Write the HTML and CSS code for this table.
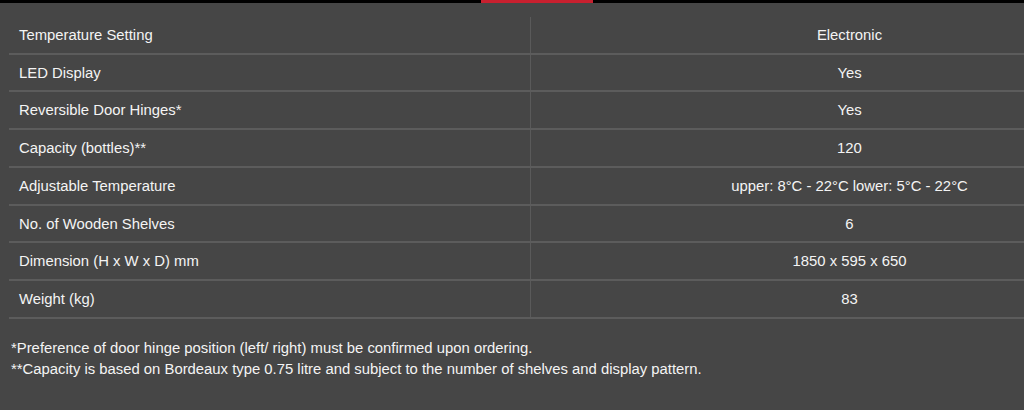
FILE: index.html
```html
<!DOCTYPE html>
<html>
<head>
<meta charset="utf-8">
<link rel="stylesheet" href="styles.css">
</head>
<body>
<div class="topbar"><div class="tab-indicator"></div></div>
<div class="content">
  <table class="specs">
    <tr><td class="label">Temperature Setting</td><td class="value">Electronic</td></tr>
    <tr><td class="label">LED Display</td><td class="value">Yes</td></tr>
    <tr><td class="label">Reversible Door Hinges*</td><td class="value">Yes</td></tr>
    <tr><td class="label">Capacity (bottles)**</td><td class="value">120</td></tr>
    <tr><td class="label">Adjustable Temperature</td><td class="value">upper: 8°C - 22°C lower: 5°C - 22°C</td></tr>
    <tr><td class="label">No. of Wooden Shelves</td><td class="value">6</td></tr>
    <tr><td class="label">Dimension (H x W x D) mm</td><td class="value">1850 x 595 x 650</td></tr>
    <tr><td class="label">Weight (kg)</td><td class="value">83</td></tr>
  </table>
  <div class="notes">
    <p>*Preference of door hinge position (left/ right) must be confirmed upon ordering.</p>
    <p>**Capacity is based on Bordeaux type 0.75 litre and subject to the number of shelves and display pattern.</p>
  </div>
</div>
</body>
</html>
```
FILE: styles.css
```css
html, body {
  margin: 0;
  padding: 0;
  background: #464646;
  overflow: hidden;
}
body {
  width: 1024px;
  height: 410px;
  font-family: "Liberation Sans", Arial, sans-serif;
  color: #f4f4f4;
  font-size: 14.85px;
}
.topbar {
  height: 3px;
  background: #000;
  position: relative;
}
.tab-indicator {
  position: absolute;
  left: 481px;
  top: 0;
  width: 112px;
  height: 3px;
  background: #c8202f;
}
.content {
  padding: 14px 0 0 9px;
}
.specs {
  border-collapse: collapse;
  width: 1015px;
  table-layout: fixed;
}
.specs td {
  padding: 8px 10px 7px;
  line-height: 20.7px;
  border-bottom: 2px solid #5c5c5c;
  white-space: nowrap;
}
.specs .label {
  width: 501px;
  text-align: left;
}
.specs .value {
  text-align: center;
  padding-left: 154px;
  border-left: 1px solid #5a5a5a;
}
.notes {
  padding: 19px 0 0 2px;
}
.notes p {
  margin: 0;
  line-height: 21px;
}
```
